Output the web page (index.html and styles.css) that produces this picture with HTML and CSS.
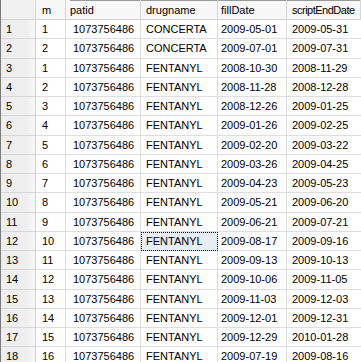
FILE: index.html
```html
<!DOCTYPE html>
<html>
<head>
<meta charset="utf-8">
<link rel="stylesheet" href="styles.css">
</head>
<body>
<div class="grid">
  <div class="row head">
    <div class="c rn"></div>
    <div class="c m">m</div>
    <div class="c pid hp">patid</div>
    <div class="c dn">drugname</div>
    <div class="c fd">fillDate</div>
    <div class="c sd hs">scriptEndDate</div>
  </div>
  <div class="row"><div class="c rn">1</div><div class="c m">1</div><div class="c pid">1073756486</div><div class="c dn">CONCERTA</div><div class="c fd">2009-05-01</div><div class="c sd">2009-05-31</div></div>
  <div class="row"><div class="c rn">2</div><div class="c m">2</div><div class="c pid">1073756486</div><div class="c dn">CONCERTA</div><div class="c fd">2009-07-01</div><div class="c sd">2009-07-31</div></div>
  <div class="row"><div class="c rn">3</div><div class="c m">1</div><div class="c pid">1073756486</div><div class="c dn">FENTANYL</div><div class="c fd">2008-10-30</div><div class="c sd">2008-11-29</div></div>
  <div class="row"><div class="c rn">4</div><div class="c m">2</div><div class="c pid">1073756486</div><div class="c dn">FENTANYL</div><div class="c fd">2008-11-28</div><div class="c sd">2008-12-28</div></div>
  <div class="row"><div class="c rn">5</div><div class="c m">3</div><div class="c pid">1073756486</div><div class="c dn">FENTANYL</div><div class="c fd">2008-12-26</div><div class="c sd">2009-01-25</div></div>
  <div class="row"><div class="c rn">6</div><div class="c m">4</div><div class="c pid">1073756486</div><div class="c dn">FENTANYL</div><div class="c fd">2009-01-26</div><div class="c sd">2009-02-25</div></div>
  <div class="row"><div class="c rn">7</div><div class="c m">5</div><div class="c pid">1073756486</div><div class="c dn">FENTANYL</div><div class="c fd">2009-02-20</div><div class="c sd">2009-03-22</div></div>
  <div class="row"><div class="c rn">8</div><div class="c m">6</div><div class="c pid">1073756486</div><div class="c dn">FENTANYL</div><div class="c fd">2009-03-26</div><div class="c sd">2009-04-25</div></div>
  <div class="row"><div class="c rn">9</div><div class="c m">7</div><div class="c pid">1073756486</div><div class="c dn">FENTANYL</div><div class="c fd">2009-04-23</div><div class="c sd">2009-05-23</div></div>
  <div class="row"><div class="c rn">10</div><div class="c m">8</div><div class="c pid">1073756486</div><div class="c dn">FENTANYL</div><div class="c fd">2009-05-21</div><div class="c sd">2009-06-20</div></div>
  <div class="row"><div class="c rn">11</div><div class="c m">9</div><div class="c pid">1073756486</div><div class="c dn">FENTANYL</div><div class="c fd">2009-06-21</div><div class="c sd">2009-07-21</div></div>
  <div class="row"><div class="c rn">12</div><div class="c m">10</div><div class="c pid">1073756486</div><div class="c dn sel">FENTANYL</div><div class="c fd">2009-08-17</div><div class="c sd">2009-09-16</div></div>
  <div class="row"><div class="c rn">13</div><div class="c m">11</div><div class="c pid">1073756486</div><div class="c dn">FENTANYL</div><div class="c fd">2009-09-13</div><div class="c sd">2009-10-13</div></div>
  <div class="row"><div class="c rn">14</div><div class="c m">12</div><div class="c pid">1073756486</div><div class="c dn">FENTANYL</div><div class="c fd">2009-10-06</div><div class="c sd">2009-11-05</div></div>
  <div class="row"><div class="c rn">15</div><div class="c m">13</div><div class="c pid">1073756486</div><div class="c dn">FENTANYL</div><div class="c fd">2009-11-03</div><div class="c sd">2009-12-03</div></div>
  <div class="row"><div class="c rn">16</div><div class="c m">14</div><div class="c pid">1073756486</div><div class="c dn">FENTANYL</div><div class="c fd">2009-12-01</div><div class="c sd">2009-12-31</div></div>
  <div class="row"><div class="c rn">17</div><div class="c m">15</div><div class="c pid">1073756486</div><div class="c dn">FENTANYL</div><div class="c fd">2009-12-29</div><div class="c sd">2010-01-28</div></div>
  <div class="row"><div class="c rn">18</div><div class="c m">16</div><div class="c pid">1073756486</div><div class="c dn">FENTANYL</div><div class="c fd">2009-07-19</div><div class="c sd">2009-08-16</div></div>
</div>
</body>
</html>
```
FILE: styles.css
```css
html, body {
  margin: 0;
  padding: 0;
  background: #ffffff;
  overflow: hidden;
}
.grid {
  width: 360px;
  height: 362px;
  border-left: 1px solid #7a7a7a;
  font-family: "Liberation Sans", Arial, sans-serif;
  font-size: 11px;
  color: #000000;
  overflow: hidden;
}
.row {
  display: grid;
  grid-template-columns: 35px 30px 75px 77px 69px 1fr;
  height: 19.25px;
}
.row.head {
  height: 20px;
  background: linear-gradient(#9a9a9a, #9a9a9a) 69px 0 / 100% 1px no-repeat, #f7f7f7;
}
.c {
  box-sizing: border-box;
  display: flex;
  align-items: center;
  padding-left: 5px;
  white-space: nowrap;
  overflow: hidden;
  border-right: 1px solid #dedede;
  border-bottom: 1px solid #dedede;
}
.head .c {
  border-right: 1px solid #d5d5d5;
  border-bottom: 1px solid #d0d0d0;
}
.rn {
  background: linear-gradient(to right, #eeeeee 0%, #efefef 75%, #f9f9f9 100%);
  border-right: 1px solid #d2d2d2;
  border-bottom: 1px solid #d6d6d6;
  padding-left: 5px;
}
.head .rn {
  background: #f1f1f1;
}
.m { padding-left: 6px; }
.pid { padding-left: 7px; }
.hp { padding-left: 4px; }
.dn { padding-left: 5px; }
.fd { padding-left: 3px; }
.sd { padding-left: 5px; border-right: none; }
.hs { letter-spacing: -0.5px; }
.sel {
  background: #e8edf3;
  outline: 1px dotted #000000;
  outline-offset: -1px;
}
```
